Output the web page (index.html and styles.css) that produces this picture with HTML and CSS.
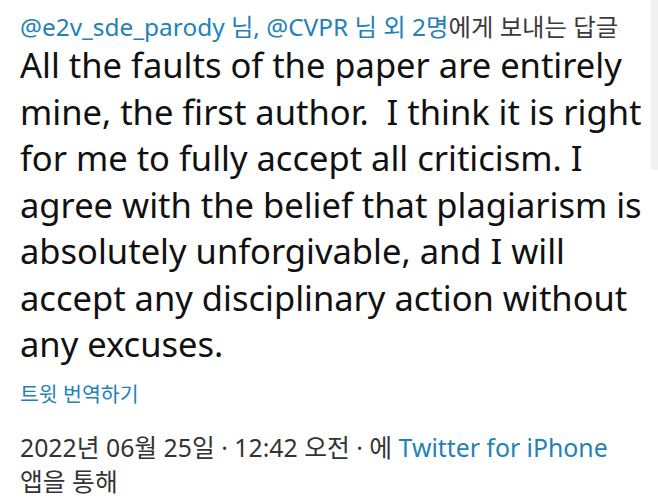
FILE: index.html
```html
<!DOCTYPE html>
<html lang="ko">
<head>
<meta charset="utf-8">
<link rel="stylesheet" href="styles.css">
</head>
<body>
<div class="scroll-thumb"></div>
<main class="tweet">
  <div class="reply-to"><span class="link">@e2v_sde_parody 님, @CVPR 님 외 2명</span>에게 보내는 답글</div>
  <p class="text">All the faults of the paper are entirely<br>mine, the first author.&nbsp; I think it is right<br>for me to fully accept all criticism. I<br>agree with the belief that plagiarism is<br>absolutely unforgivable, and I will<br>accept any disciplinary action without<br>any excuses.</p>
  <div class="translate link">트윗 번역하기</div>
  <div class="meta">2022년 06월 25일 · 12:42 오전 · 에 <span class="link">Twitter for iPhone</span><br>앱을 통해</div>
</main>
</body>
</html>
```
FILE: styles.css
```css
html, body {
  margin: 0;
  background: #ffffff;
}
body {
  width: 658px;
  height: 503px;
  overflow: hidden;
  position: relative;
  font-family: "Noto Sans", "Noto Sans CJK KR", sans-serif;
}
.scroll-thumb {
  position: absolute;
  top: 0;
  right: 0;
  width: 7px;
  height: 170px;
  background: #f1f1f1;
}
.tweet {
  padding: 12px 0 0 20px;
}
.link {
  color: #2281b8;
}
.reply-to {
  font-size: 24.4px;
  line-height: 30px;
  color: #3b3b3b;
}
.text {
  margin: 0;
  font-size: 34.5px;
  line-height: 46.5px;
  color: #111111;
}
.translate {
  margin-top: 12px;
  font-size: 20.5px;
  line-height: 28px;
}
.meta {
  margin-top: 22px;
  font-size: 24.8px;
  line-height: 34px;
  color: #333333;
}
```
